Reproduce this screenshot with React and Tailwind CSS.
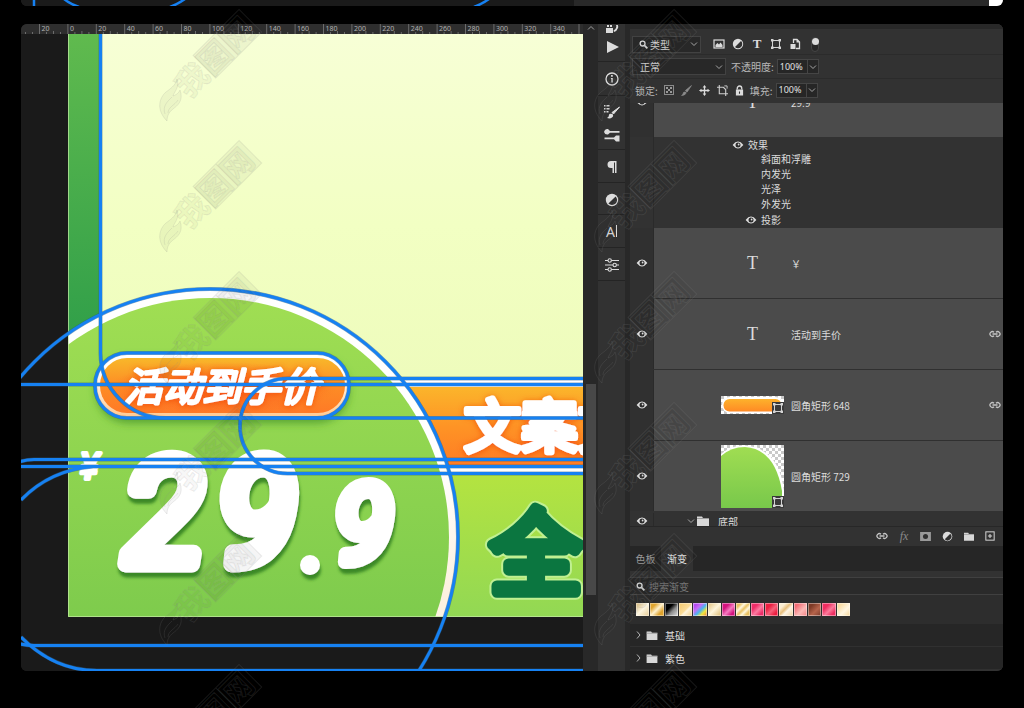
import React from "react";

const RULER = ["20", "0", "20", "40", "60", "80", "100", "120", "140", "160", "180", "200", "220", "240", "260", "280", "300", "320", "340"];
const CJK = "'Noto Sans CJK SC', sans-serif";

function Ruler() {
  return (
    <svg viewBox="21 24 562 10" preserveAspectRatio="xMinYMin slice" className="h-[10px] w-full bg-[#2e2e2e]" aria-hidden="true">
      {RULER.map((label, i) => {
        const x = 39.5 + i * 28.4;
        return (
          <g key={i}>
            <path
              d={`M${x} 24V34M${x + 7} 32V34M${x + 14} 31V34M${x + 21} 32V34`}
              stroke="#6c6c6c"
              strokeWidth="1"
            />
            <text x={x + 2} y="31" fontSize="7" fill="#b0b0b0" fontFamily="'Noto Sans', sans-serif">{label}</text>
          </g>
        );
      })}
      <path d="M25.5 32V34M32.5 32V34M579 24V34" stroke="#6c6c6c" />
    </svg>
  );
}

function Artwork() {
  return (
    <svg viewBox="21 34 562 637" preserveAspectRatio="xMinYMin slice" className="min-h-0 w-full flex-1 bg-[#1a1a1a]" role="img" aria-label="画布">
      <defs>
        <linearGradient id="strip" x1="0" y1="0" x2="0" y2="1"><stop offset="0" stopColor="#60ba4e" /><stop offset=".55" stopColor="#2e9e49" /></linearGradient>
        <linearGradient id="cream" x1="0" y1="0" x2="0" y2="1"><stop offset="0" stopColor="#f7ffd6" /><stop offset=".5" stopColor="#f2ffc3" /><stop offset="1" stopColor="#edfbba" /></linearGradient>
        <linearGradient id="lime" x1="0" y1="0" x2="0" y2="1"><stop offset="0" stopColor="#b6e43f" /><stop offset="1" stopColor="#92d854" /></linearGradient>
        <linearGradient id="leaf" x1="0" y1="0" x2="0" y2=".75"><stop offset="0" stopColor="#a0de53" /><stop offset="1" stopColor="#7ac94c" /></linearGradient>
        <linearGradient id="ring" x1="0" y1="0" x2="0" y2="1"><stop offset=".35" stopColor="#ffffff" /><stop offset=".6" stopColor="#fcf1e0" /></linearGradient>
        <linearGradient id="banner" x1="0" y1="0" x2="0" y2="1"><stop offset="0" stopColor="#fbb52b" /><stop offset=".5" stopColor="#fe9425" /><stop offset="1" stopColor="#ff7c24" /></linearGradient>
        <linearGradient id="pill" x1="0" y1="0" x2="0" y2="1"><stop offset="0" stopColor="#f8b72a" /><stop offset=".5" stopColor="#fd8d25" /><stop offset="1" stopColor="#ff7a26" /></linearGradient>
        <linearGradient id="edge" x1="0" y1="0" x2="0" y2="1"><stop offset=".3" stopColor="#ffffff" /><stop offset="1" stopColor="#ffc88d" /></linearGradient>
        <radialGradient id="glow"><stop offset=".35" stopColor="#fb5a1e" stopOpacity=".55" /><stop offset="1" stopColor="#fb5a1e" stopOpacity="0" /></radialGradient>
        <filter id="shade" x="-20%" y="-20%" width="140%" height="150%"><feDropShadow dx="1" dy="5" stdDeviation="1.5" floodColor="#2f7d22" floodOpacity=".85" /></filter>
        <filter id="soft" x="-20%" y="-40%" width="140%" height="200%"><feDropShadow dx="0" dy="5" stdDeviation="4" floodColor="#3c8a24" floodOpacity=".7" /></filter>
        <filter id="warm" x="-20%" y="-20%" width="140%" height="140%"><feDropShadow dx="0" dy="1" stdDeviation="3" floodColor="#f04a10" floodOpacity=".8" /></filter>
        <clipPath id="page"><rect x="68" y="34" width="515" height="583" /></clipPath>
      </defs>

      <g clipPath="url(#page)">
        <rect x="68" y="34" width="515" height="583" fill="url(#strip)" />
        <path d="M100 34H583V418H165A64 64 0 0 1 100 354Z" fill="url(#cream)" />
        <rect x="380" y="466" width="203" height="151" fill="url(#lime)" />
        <rect x="240" y="378" width="400" height="96" rx="47" fill="#fff" />
        <rect x="247" y="387" width="400" height="78" rx="39" fill="url(#banner)" />
        <circle cx="210" cy="537" r="248" fill="url(#ring)" />
        <circle cx="210" cy="537" r="239" fill="url(#leaf)" />
        <path d="M68.500 34V616.500H583" fill="none" stroke="#c5eba5" strokeOpacity=".7" />

        <g filter="url(#soft)">
          <rect x="96" y="353" width="253" height="65" rx="32" fill="url(#edge)" />
        </g>
        <rect x="100" y="358" width="245" height="55" rx="27" fill="url(#pill)" />
        <ellipse cx="222" cy="388" rx="115" ry="26" fill="url(#glow)" />
        <text x="124" y="401" fontFamily={CJK} fontSize="39" fontWeight="400" fontStyle="italic" fill="#fff" stroke="#fff" strokeWidth="3" strokeLinejoin="round" filter="url(#warm)">活动到手价</text>
        <text x="464" y="447" fontFamily={CJK} fontSize="57" fontWeight="400" fill="#fff" stroke="#fff" strokeWidth="6" strokeLinejoin="round" filter="url(#warm)">文案文</text>
        <text x="490" y="587" fontFamily={CJK} fontSize="92" fontWeight="400" fill="#0b7640" stroke="#c0f092" strokeWidth="15" strokeLinejoin="round" strokeLinecap="round" aria-hidden="true">全</text>
        <text x="490" y="587" fontFamily={CJK} fontSize="92" fontWeight="400" fill="#0b7640" stroke="#0b7640" strokeWidth="11" strokeLinejoin="round">全</text>

        <g fontFamily="Roboto, sans-serif" fontWeight="400" fontStyle="italic" fill="#fff" stroke="#fff" strokeLinejoin="round" filter="url(#shade)">
          <text x="124" y="564" fontSize="146" strokeWidth="17">2</text>
          <text x="217" y="564" fontSize="146" strokeWidth="17">9</text>
          <circle cx="310" cy="565" r="10" stroke="none" />
          <text x="334" y="562" fontSize="108" strokeWidth="14">9</text>
        </g>
        <text x="80" y="479" fontFamily="Roboto, sans-serif" fontSize="36" fontWeight="400" fontStyle="italic" fill="#fff" stroke="#fff" strokeWidth="4" strokeLinejoin="round">¥</text>
      </g>

      {[["#2d5f86", 4], ["#1681f2", 3]].map(([color, width]) => (
        <g key={color} fill="none" stroke={color} strokeWidth={width} strokeOpacity={width === 4 ? 0.55 : 1}>
          <path d="M100.5 34V353A65 65 0 0 0 165.500 418H583" />
          <circle cx="210" cy="537" r="248" />
          <rect x="95" y="353" width="254" height="65" rx="32" />
          <path d="M21 384.500H583" />
          <rect x="240" y="378.500" width="420" height="95" rx="47.500" />
          <path d="M10 467Q20 459.500 34 459.500H583" />
          <path d="M21 466.500H583M21 500Q50 470 93 466.500" />
          <path d="M10 640Q20 645.500 34 645.500H583" />
          <path d="M21 637Q54 670.500 97 670.500H583" />
        </g>
      ))}
    </svg>
  );
}

function Eye() {
  return (
    <svg viewBox="0 0 12 8" className="h-2 w-3" aria-hidden="true">
      <path d="M.6 4Q6-2.800 11.400 4 6 10.800.6 4Z" fill="#dedede" />
      <circle cx="6" cy="4" r="2.500" fill="#2e2e2e" />
      <circle cx="6.600" cy="3.500" r=".9" fill="#dedede" />
    </svg>
  );
}

function Chevron({ className }) {
  return (
    <svg viewBox="0 0 8 8" className={className} fill="none" stroke="#a5a5a5" strokeWidth="1" aria-hidden="true">
      <path d="M1 2.500 4 5.500 7 2.500" />
    </svg>
  );
}

function Folder({ className }) {
  return (
    <svg viewBox="0 0 12 10" className={className} aria-hidden="true">
      <path d="M0 1.500V.5H5L6 2H12V10H0Z" fill="#d8d8d8" />
      <path d="M0 2.500H12" stroke="#8a8a8a" strokeWidth=".8" />
    </svg>
  );
}

function Search({ className }) {
  return (
    <svg viewBox="0 0 10 10" className={className} fill="none" stroke="#dedede" aria-hidden="true">
      <circle cx="4" cy="4" r="2.700" strokeWidth="1.500" />
      <path d="M6 6 9.300 9.300" strokeWidth="1.900" />
    </svg>
  );
}

function HalfCircle({ className }) {
  return (
    <svg viewBox="0 0 12 12" className={className} aria-hidden="true">
      <circle cx="6" cy="6" r="5.200" fill="#dcdcdc" />
      <path d="M9 3A4.200 4.200 0 0 1 3 9Z" fill="#303030" />
    </svg>
  );
}

function ShapeGlyph({ className }) {
  return (
    <svg viewBox="0 0 12 12" className={className} fill="none" stroke="#d4d4d4" strokeWidth="1" aria-hidden="true">
      <rect x="2.500" y="2.500" width="7" height="7" />
      <path d="M1 1H3.500V3.500H1ZM8.500 1H11V3.500H8.500ZM1 8.500H3.500V11H1ZM8.500 8.500H11V11H8.500Z" fill="#d4d4d4" stroke="none" />
    </svg>
  );
}

function Link() {
  return (
    <svg viewBox="0 0 12 8" className="h-2 w-3" fill="none" stroke="#c4c4c4" strokeWidth="1.300" aria-hidden="true">
      <path d="M5 2.200A2.400 2.400 0 1 0 5 5.800M7 2.200A2.400 2.400 0 1 1 7 5.800M3.500 4H8.500" />
    </svg>
  );
}

const tool = {
  history: <path d="M3 4H5V9H3ZM6 4H8V9H6ZM2 10H9V15H2ZM11 3Q15 7 14 10T10 14L9.500 12.500Q12 11 12.300 9T10 4Z" fill="#dcdcdc" />,
  play: <path d="M3 2 15 8 3 14Z" fill="#dcdcdc" />,
  info: (
    <g>
      <circle cx="8" cy="8" r="6" fill="none" stroke="#dcdcdc" strokeWidth="1.300" />
      <path d="M7 7H8.800V11.500H7.300V8H6.800ZM7 4H8.800V5.700H7Z" fill="#dcdcdc" />
    </g>
  ),
  brush: (
    <g>
      <path d="M0 1H1.500V2.500H0ZM2.500 1H5.500V2.500H2.500ZM0 4H1.500V5.500H0ZM2.500 4H5.500V5.500H2.500ZM0 7H1.500V8.500H0ZM2.500 7H4.500V8.500H2.500Z" fill="#dcdcdc" />
      <path d="M15.500 3 9.500 10 8 8.500Z" fill="#dcdcdc" stroke="#dcdcdc" />
      <path d="M3 14Q5 13 5 11T8.500 10Q10 12 8 13.500T3 14Z" fill="#dcdcdc" />
    </g>
  ),
  brushes: (
    <path d="M0 5Q1 1.500 4 2L6 4H15.500V5.700H6L4 7.500Q1 8 0 5ZM15.500 8.500V14.500H12L10 12.200H.5V10.500H10L12 8.500Z" fill="#dcdcdc" />
  ),
  paragraph: <path d="M7 2H12.500V14H11V3.500H10V14H8.500V9H7A3.500 3.500 0 0 1 7 2Z" fill="#dcdcdc" />,
  half: (
    <g>
      <circle cx="8" cy="8" r="6.200" fill="#dcdcdc" />
      <path d="M11.600 4.400A5 5 0 0 1 4.400 11.600Z" fill="#303030" />
    </g>
  ),
  sliders: (
    <g fill="none" stroke="#dcdcdc" strokeWidth="1.100">
      <path d="M1 3.500H4M7.500 3.500H15M1 8H9M12.500 8H15M1 12.500H4M7.500 12.500H15" />
      <circle cx="5.700" cy="3.500" r="1.700" /><circle cx="10.700" cy="8" r="1.700" /><circle cx="5.700" cy="12.500" r="1.700" />
    </g>
  ),
};

function ToolButton({ name, label, className }) {
  return (
    <button aria-label={label} className={`flex w-full items-center justify-center ${className}`}>
      <svg viewBox="0 0 16 16" className="size-4 shrink-0" aria-hidden="true">{tool[name]}</svg>
    </button>
  );
}

function Toolbar() {
  return (
    <nav aria-label="面板" className="flex w-[29px] shrink-0 flex-col border-r-2 border-[#282828] bg-[#323232] pt-px *:border-b *:border-[#242424]">
      <div className="h-[37px]">
        <div className="flex h-[9px] items-end overflow-hidden"><ToolButton name="history" label="历史记录" className="h-4" /></div>
        <ToolButton name="play" label="动作" className="h-[25px]" />
      </div>
      <ToolButton name="info" label="信息" className="h-[34px]" />
      <div className="h-[54px] pt-1">
        <ToolButton name="brush" label="画笔设置" className="h-[24px]" />
        <ToolButton name="brushes" label="画笔" className="h-[22px]" />
      </div>
      <ToolButton name="paragraph" label="段落" className="h-[33px] pt-[2px]" />
      <ToolButton name="half" label="调整" className="h-[32px] pt-[2px]" />
      <button aria-label="字符" className="flex h-[33px] items-center justify-center font-['Noto_Sans',sans-serif] text-[14px] text-[#dcdcdc]">
        A<span className="ml-px h-3 w-px bg-[#dcdcdc]" />
      </button>
      <ToolButton name="sliders" label="属性" className="h-[33px] pt-[2px]" />
    </nav>
  );
}

function Percent({ id, label, value }) {
  return (
    <div className="flex items-center">
      <label htmlFor={id} className="mr-[3px] text-[10px] text-[#b8b8b8]">{label}</label>
      <div className="flex h-[15px] border border-[#454545] bg-[#262626]">
        <input id={id} defaultValue={value} className="w-[29px] pl-[2px] font-['Noto_Sans',sans-serif] text-[9px] text-[#e2e2e2] outline-none" />
        <button aria-label={`${label}选项`} className="flex w-[11px] items-center justify-center border-l border-[#454545]"><Chevron className="size-2" /></button>
      </div>
    </div>
  );
}

function Filters() {
  return (
    <div className="text-[10px] text-[#dcdcdc]">
      <div className="h-[5px] bg-[#282828]" />
      <div className="flex h-[26px] items-center border-b border-[#2b2b2b] pl-[2px] pt-[5px]">
        <div className="mr-3 flex h-[17px] w-[69px] items-center border border-[#424242] bg-[#282828] pl-[6px] pr-[2px]">
          <Search className="size-[9px]" />
          <select aria-label="筛选类型" className="ml-[2px] min-w-0 flex-1 appearance-none outline-none"><option>类型</option></select>
          <Chevron className="size-2" />
        </div>
        <div className="flex items-center gap-[7px]">
          <button aria-label="像素图层" className="flex w-[12px] justify-center">
            <svg viewBox="0 0 12 10" className="h-[10px] w-3"><rect x="1" y="1" width="10" height="8" fill="none" stroke="#dcdcdc" strokeWidth="1.200" /><path d="M2.500 8V6L4.500 4 6 5.500 7.500 3.500 9.500 6V8Z" fill="#dcdcdc" /></svg>
          </button>
          <button aria-label="调整图层"><HalfCircle className="size-3" /></button>
          <button aria-label="文字图层" className="w-[12px] text-center font-['Liberation_Serif',serif] text-[13px] font-bold leading-3">T</button>
          <button aria-label="形状图层"><ShapeGlyph className="size-3" /></button>
          <button aria-label="智能对象">
            <svg viewBox="0 0 12 12" className="size-3"><path d="M4.500 5V1.500H8L10.500 4V10.500H7" fill="none" stroke="#dcdcdc" strokeWidth="1.300" /><path d="M7.500 1V4.500H11Z" fill="#dcdcdc" /><rect x="1.500" y="6" width="5" height="5" fill="#dcdcdc" /></svg>
          </button>
          <button aria-label="开关滤镜" className="ml-[3px] flex h-[15px] w-2 justify-center rounded-full border border-[#454545] bg-[#282828]"><span className="size-[7px] shrink-0 rounded-full bg-[#dcdcdc]" /></button>
        </div>
      </div>
      <div className="flex h-6 items-center border-b border-[#2b2b2b] pl-[2px]">
        <div className="mr-[5px] flex h-[17px] w-[94px] items-center border border-[#424242] bg-[#282828] pl-[7px] pr-[2px]">
          <select aria-label="混合模式" className="min-w-0 flex-1 appearance-none outline-none"><option>正常</option></select>
          <Chevron className="size-2" />
        </div>
        <Percent id="opacity" label="不透明度:" value="100%" />
      </div>
      <div className="flex h-6 items-center pb-[2px] pl-[5px]">
        <span className="mr-[6px] text-[#b8b8b8]">锁定:</span>
        <div className="mr-[6px] flex items-center gap-[7px]">
          <button aria-label="锁定透明像素"><svg viewBox="0 0 10 10" className="size-[10px]"><rect x=".5" y=".5" width="9" height="9" fill="none" stroke="#8a8a8a" /><path d="M2 2H4V4H2ZM6 2H8V4H6ZM4 4H6V6H4ZM2 6H4V8H2ZM6 6H8V8H6Z" fill="#9a9a9a" /></svg></button>
          <button aria-label="锁定图像像素"><svg viewBox="0 0 10 10" className="size-[11px]"><path d="M9.500.5 5.500 6.500 4 5ZM.5 9.500Q2 9 2 7.500T4.500 6.500Q5 9 .5 9.500Z" fill="#8c8c8c" stroke="#8c8c8c" strokeWidth=".6" /></svg></button>
          <button aria-label="锁定位置"><svg viewBox="0 0 12 12" className="size-[11px]" fill="#dcdcdc"><path d="M5.300 2.500H6.700V5.300H9.500V6.700H6.700V9.500H5.300V6.700H2.500V5.300H5.300ZM6 0 8 2.700H4ZM6 12 4 9.300H8ZM0 6 2.700 4V8ZM12 6 9.300 8V4Z" /></svg></button>
          <button aria-label="锁定画板"><svg viewBox="0 0 12 12" className="size-[11px]" fill="none" stroke="#d0d0d0"><path d="M2.500 0V9.500H12M0 2.500H7L9.500 5V12" strokeWidth="1.200" /><path d="M8 1H11V4" strokeWidth="1" /></svg></button>
          <button aria-label="锁定全部"><svg viewBox="0 0 10 12" className="h-[11px] w-[9px]"><path d="M2.500 5V3.500A2.500 2.500 0 0 1 7.500 3.500V5" fill="none" stroke="#dcdcdc" strokeWidth="1.500" /><path d="M1 5H9V11.500H1Z" fill="#dcdcdc" /><path d="M5 7V9.500" stroke="#303030" strokeWidth="1.200" /></svg></button>
        </div>
        <Percent id="fill" label="填充:" value="100%" />
      </div>
    </div>
  );
}

function Checker({ id }) {
  return (
    <pattern id={id} width="6" height="6" patternUnits="userSpaceOnUse">
      <rect width="6" height="6" fill="#fff" /><path d="M0 0H3V3H0ZM3 3H6V6H3Z" fill="#c9c9c9" />
    </pattern>
  );
}

function PillThumb() {
  return (
    <div className="relative">
      <svg viewBox="0 0 63 18" className="h-[18px] w-[63px]" aria-hidden="true">
        <defs><Checker id="ck1" /><linearGradient id="t1" x1="0" y1="0" x2="0" y2="1"><stop offset="0" stopColor="#fdb22b" /><stop offset="1" stopColor="#ff8a25" /></linearGradient></defs>
        <rect width="63" height="18" fill="url(#ck1)" />
        <rect x="1" y="1" width="61" height="16" rx="8" fill="#fff" />
        <rect x="2.500" y="3" width="58" height="12.500" rx="6" fill="url(#t1)" />
      </svg>
      <span className="absolute bottom-0 right-0 bg-[#3a3a3a]"><ShapeGlyph className="size-3" /></span>
    </div>
  );
}

function DomeThumb() {
  return (
    <div className="relative">
      <svg viewBox="0 0 63 63" className="size-[63px]" aria-hidden="true">
        <defs><Checker id="ck2" /><linearGradient id="t2" x1="0" y1="0" x2="0" y2="1"><stop offset="0" stopColor="#a0dd52" /><stop offset="1" stopColor="#78c84b" /></linearGradient></defs>
        <rect width="63" height="63" fill="url(#ck2)" />
        <path d="M0 9Q10 0 24 .5 58 3 63 46V63H0Z" fill="#fff" />
        <path d="M0 11Q10 2 24 2 54 4 61 46V63H0Z" fill="url(#t2)" />
      </svg>
      <span className="absolute bottom-0 right-0 bg-[#3a3a3a]"><ShapeGlyph className="size-3" /></span>
    </div>
  );
}

const TypeThumb = () => <span className="font-['Liberation_Serif',serif] text-[18px] leading-[18px] text-[#dcdcdc]">T</span>;

function Layer({ name, thumb, linked }) {
  return (
    <li className="flex h-[70px] w-full shrink-0">
      <button aria-label={`显示${name}`} className="flex w-6 shrink-0 items-center justify-center border-r border-[#2a2a2a] bg-[#303030]"><Eye /></button>
      <div className="flex min-w-0 flex-1 items-center gap-[7px] bg-[#4b4b4b] pl-[67px] pr-[2px]">
        <div className="flex w-[63px] shrink-0 justify-center">{thumb}</div>
        <span className="flex-1 truncate">{name}</span>
        {linked && <Link />}
      </div>
    </li>
  );
}

function Effects() {
  return (
    <li className="flex h-[91px]">
      <div className="w-6 shrink-0 border-r border-[#2a2a2a]" />
      <ul className="pl-[78px] *:h-[15px] *:leading-[14px]">
        <li className="flex items-center gap-1"><Eye />效果</li>
        <li className="pl-[29px]">斜面和浮雕</li>
        <li className="pl-[29px]">内发光</li>
        <li className="pl-[29px]">光泽</li>
        <li className="pl-[29px]">外发光</li>
        <li className="flex items-center gap-1 pl-[13px]"><Eye />投影</li>
      </ul>
    </li>
  );
}

const SWATCHES = [
  "bg-[linear-gradient(135deg,#d9b877,#fdf6e0_50%,#e5c991)]",
  "bg-[linear-gradient(135deg,#e0a52f_25%,#fff2cf_50%,#dfa32e_75%)]",
  "bg-[linear-gradient(135deg,#000_35%,#8c8c8c_60%,#e4e4e4)]",
  "bg-[linear-gradient(135deg,#f3c76b,#fbdc98_50%,#fff5dd_60%,#f2cb7d)]",
  "bg-[linear-gradient(135deg,#b44cf0_20%,#c86af5_35%,#4ab4f0_55%,#f1e63c_75%,#ee7a3a)]",
  "bg-[linear-gradient(135deg,#e2c07a,#fff6dc_50%,#dcb96f)]",
  "bg-[linear-gradient(135deg,#d3127d_30%,#f57cc0_55%,#d3127d_80%)]",
  "bg-[linear-gradient(135deg,#e9c162_20%,#fff8e0_35%,#e9c162_50%,#fff8e0_65%,#e9c162_80%)]",
  "bg-[linear-gradient(135deg,#ee2d68_30%,#fb7ba0_55%,#ee2d68_80%)]",
  "bg-[linear-gradient(135deg,#ed1f41_30%,#f6617a_55%,#ed1f41_80%)]",
  "bg-[linear-gradient(135deg,#fdeed2_25%,#e8bf7d_45%,#fff6e6_60%,#efce99)]",
  "bg-[linear-gradient(135deg,#f16c74_20%,#fcb9b6_60%,#f48083)]",
  "bg-[linear-gradient(135deg,#7e3a26_25%,#b6644b_60%,#7b3a2a)]",
  "bg-[linear-gradient(135deg,#ee2d60_30%,#fb7b9b_55%,#ee2d60_80%)]",
  "bg-[linear-gradient(135deg,#f9dca4_20%,#fff6e2_60%,#f6d596)]",
];

function FooterIcons() {
  return (
    <div className="flex h-5 items-center justify-end gap-[11px] border-t border-[#272727] pb-px pr-2">
      <button aria-label="链接图层"><Link /></button>
      <button aria-label="图层样式" className="w-[10px] font-['Liberation_Serif',serif] text-[12px] italic leading-3 text-[#8a8a8a]">fx</button>
      <button aria-label="图层蒙版"><svg viewBox="0 0 12 10" className="h-[9px] w-[11px]"><path d="M0 0H12V10H0Z" fill="#9a9a9a" /><circle cx="6" cy="5" r="2.800" fill="#303030" /></svg></button>
      <button aria-label="新建调整图层"><HalfCircle className="size-[11px]" /></button>
      <button aria-label="新建组"><Folder className="h-[9px] w-[10px]" /></button>
      <button aria-label="新建图层"><svg viewBox="0 0 12 12" className="size-[10px]" fill="none" stroke="#d4d4d4"><rect x="1" y="1" width="10" height="10" strokeWidth="1.200" /><path d="M6 3.500V8.500M3.500 6H8.500" strokeWidth="1.300" /></svg></button>
    </div>
  );
}

function GradientGroup({ name }) {
  return (
    <li className="flex h-[23px] items-center border-b border-[#303030] bg-[#262626] pl-[6px]">
      <button className="flex items-center">
        <svg viewBox="0 0 6 8" className="h-2 w-[6px]" fill="none" stroke="#b5b5b5" aria-hidden="true"><path d="M1 .5 4 4 1 7.500" /></svg>
        <Folder className="ml-1 h-[9px] w-3" />
        <span className="ml-[7px]">{name}</span>
      </button>
    </li>
  );
}

function SidePanel() {
  return (
    <aside className="flex w-[373px] shrink-0 flex-col bg-[#323232] text-[10px] text-[#dcdcdc]">
      <Filters />
      <ul className="flex flex-col">
        <li className="h-[34px] overflow-hidden">
          <ul className="flex h-full flex-col justify-end"><Layer name="29.9" thumb={<TypeThumb />} /></ul>
        </li>
        <Effects />
        <li>
          <ul className="flex flex-col gap-px bg-[#303030]">
            <Layer name="￥" thumb={<TypeThumb />} />
            <Layer name="活动到手价" thumb={<TypeThumb />} linked />
            <Layer name="圆角矩形 648" thumb={<PillThumb />} linked />
            <Layer name="圆角矩形 729" thumb={<DomeThumb />} />
          </ul>
        </li>
        <li className="flex h-[15px] items-start overflow-hidden pt-[2px]">
          <button aria-label="显示底部" className="flex h-4 w-6 items-center justify-center border-r border-[#2a2a2a]"><Eye /></button>
          <button className="flex h-4 items-center pl-[33px]">
            <Chevron className="size-2" />
            <Folder className="ml-[2px] h-[10px] w-3" />
            <span className="ml-[9px]">底部</span>
          </button>
        </li>
      </ul>
      <FooterIcons />
      <div role="tablist" className="flex h-[25px] bg-[#262626]">
        <button role="tab" aria-selected="false" className="w-[31px] text-[#9a9a9a]">色板</button>
        <button role="tab" aria-selected="true" className="w-[32px] bg-[#323232] text-[#ececec]">渐变</button>
      </div>
      <label className="mt-[6px] flex h-[18px] items-center border-y border-[#404040] bg-[#2a2a2a] pl-[6px]">
        <Search className="size-[9px]" />
        <input aria-label="搜索渐变" placeholder="搜索渐变" className="ml-[4px] flex-1 text-[10px] outline-none placeholder:text-[#757575]" />
      </label>
      <div className="flex h-[29px] items-center bg-[#2d2d2d] pl-[6px]">
        <div className="grid w-[214px] grid-cols-15 gap-px">
          {SWATCHES.map((fill, i) => <button key={i} aria-label={`渐变 ${i + 1}`} className={`h-[13px] ring-1 ring-inset ring-white/40 ${fill}`} />)}
        </div>
      </div>
      <ul className="flex flex-col">
        <GradientGroup name="基础" />
        <GradientGroup name="紫色" />
      </ul>
    </aside>
  );
}

function Watermarks() {
  const marks = [];
  for (const x of [160, 595]) for (const y of [-1, 0, 1, 2, 3, 4, 5]) marks.push([x, y * 131 + 8]);
  return (
    <svg className="pointer-events-none absolute inset-0 size-full" aria-hidden="true">
      {marks.map(([x, y]) => (
        <g key={`${x}-${y}`} fill="#000" fillOpacity=".04" stroke="#8a8a8a" strokeOpacity=".16" strokeWidth="1">
          <path transform={`translate(${x} ${y})`} d="M7 113C-4 102-1 90 6 84 13 79 16 76 17 71 20 79 14 84 13 88 18 86 19 84 20 82 24 93 17 98 13 101 9 104 7 108 7 113ZM5 106C2 98 8 93 12 89M8 105C8 99 15 97 18 92" />
          <g transform={`translate(${x + 31} ${y + 92}) rotate(-45)`}>
            <path d="M33-30H98V2H33ZM65-30V2" />
            <text x="-1" y="-2" fontFamily={CJK} fontSize="32" fontWeight="700">我图网</text>
          </g>
        </g>
      ))}
    </svg>
  );
}

export default function App() {
  return (
    <div className="relative min-h-screen overflow-hidden bg-black px-[21px] pb-9 font-['Noto_Sans_CJK_SC',sans-serif] leading-normal">
      <div className="flex h-[6px] overflow-hidden rounded-b-md bg-[#292929]">
        <div className="flex-1 bg-[#1a1a1a]">
          <svg viewBox="21 0 553 6" preserveAspectRatio="xMinYMin slice" className="h-[6px] w-full" fill="none" stroke="#1681f2" strokeWidth="2.500" aria-hidden="true">
            <path d="M34 0V6M64-1Q70 4 79 7M170 7Q178 4 185-1M474 7Q482 4 489-1" />
          </svg>
        </div>
        <div className="w-[415px]" />
        <div className="w-[14px] bg-white" />
      </div>
      <main className="mt-[18px] flex overflow-hidden rounded-md bg-[#282828]">
        <section className="flex min-w-0 flex-1 flex-col">
          <Ruler />
          <Artwork />
        </section>
        <div className="flex w-[15px] shrink-0 flex-col items-center bg-[#282828]">
          <svg viewBox="0 0 8 8" className="size-2" fill="none" stroke="#a0a0a0" aria-hidden="true"><path d="M1 5.500 4 2.500 7 5.500" /></svg>
          <div className="mt-[352px] h-[211px] w-[10px] bg-[#484848]" />
        </div>
        <Toolbar />
        <div className="w-[3px] shrink-0 bg-[#282828]" />
        <SidePanel />
      </main>
      <Watermarks />
    </div>
  );
}
